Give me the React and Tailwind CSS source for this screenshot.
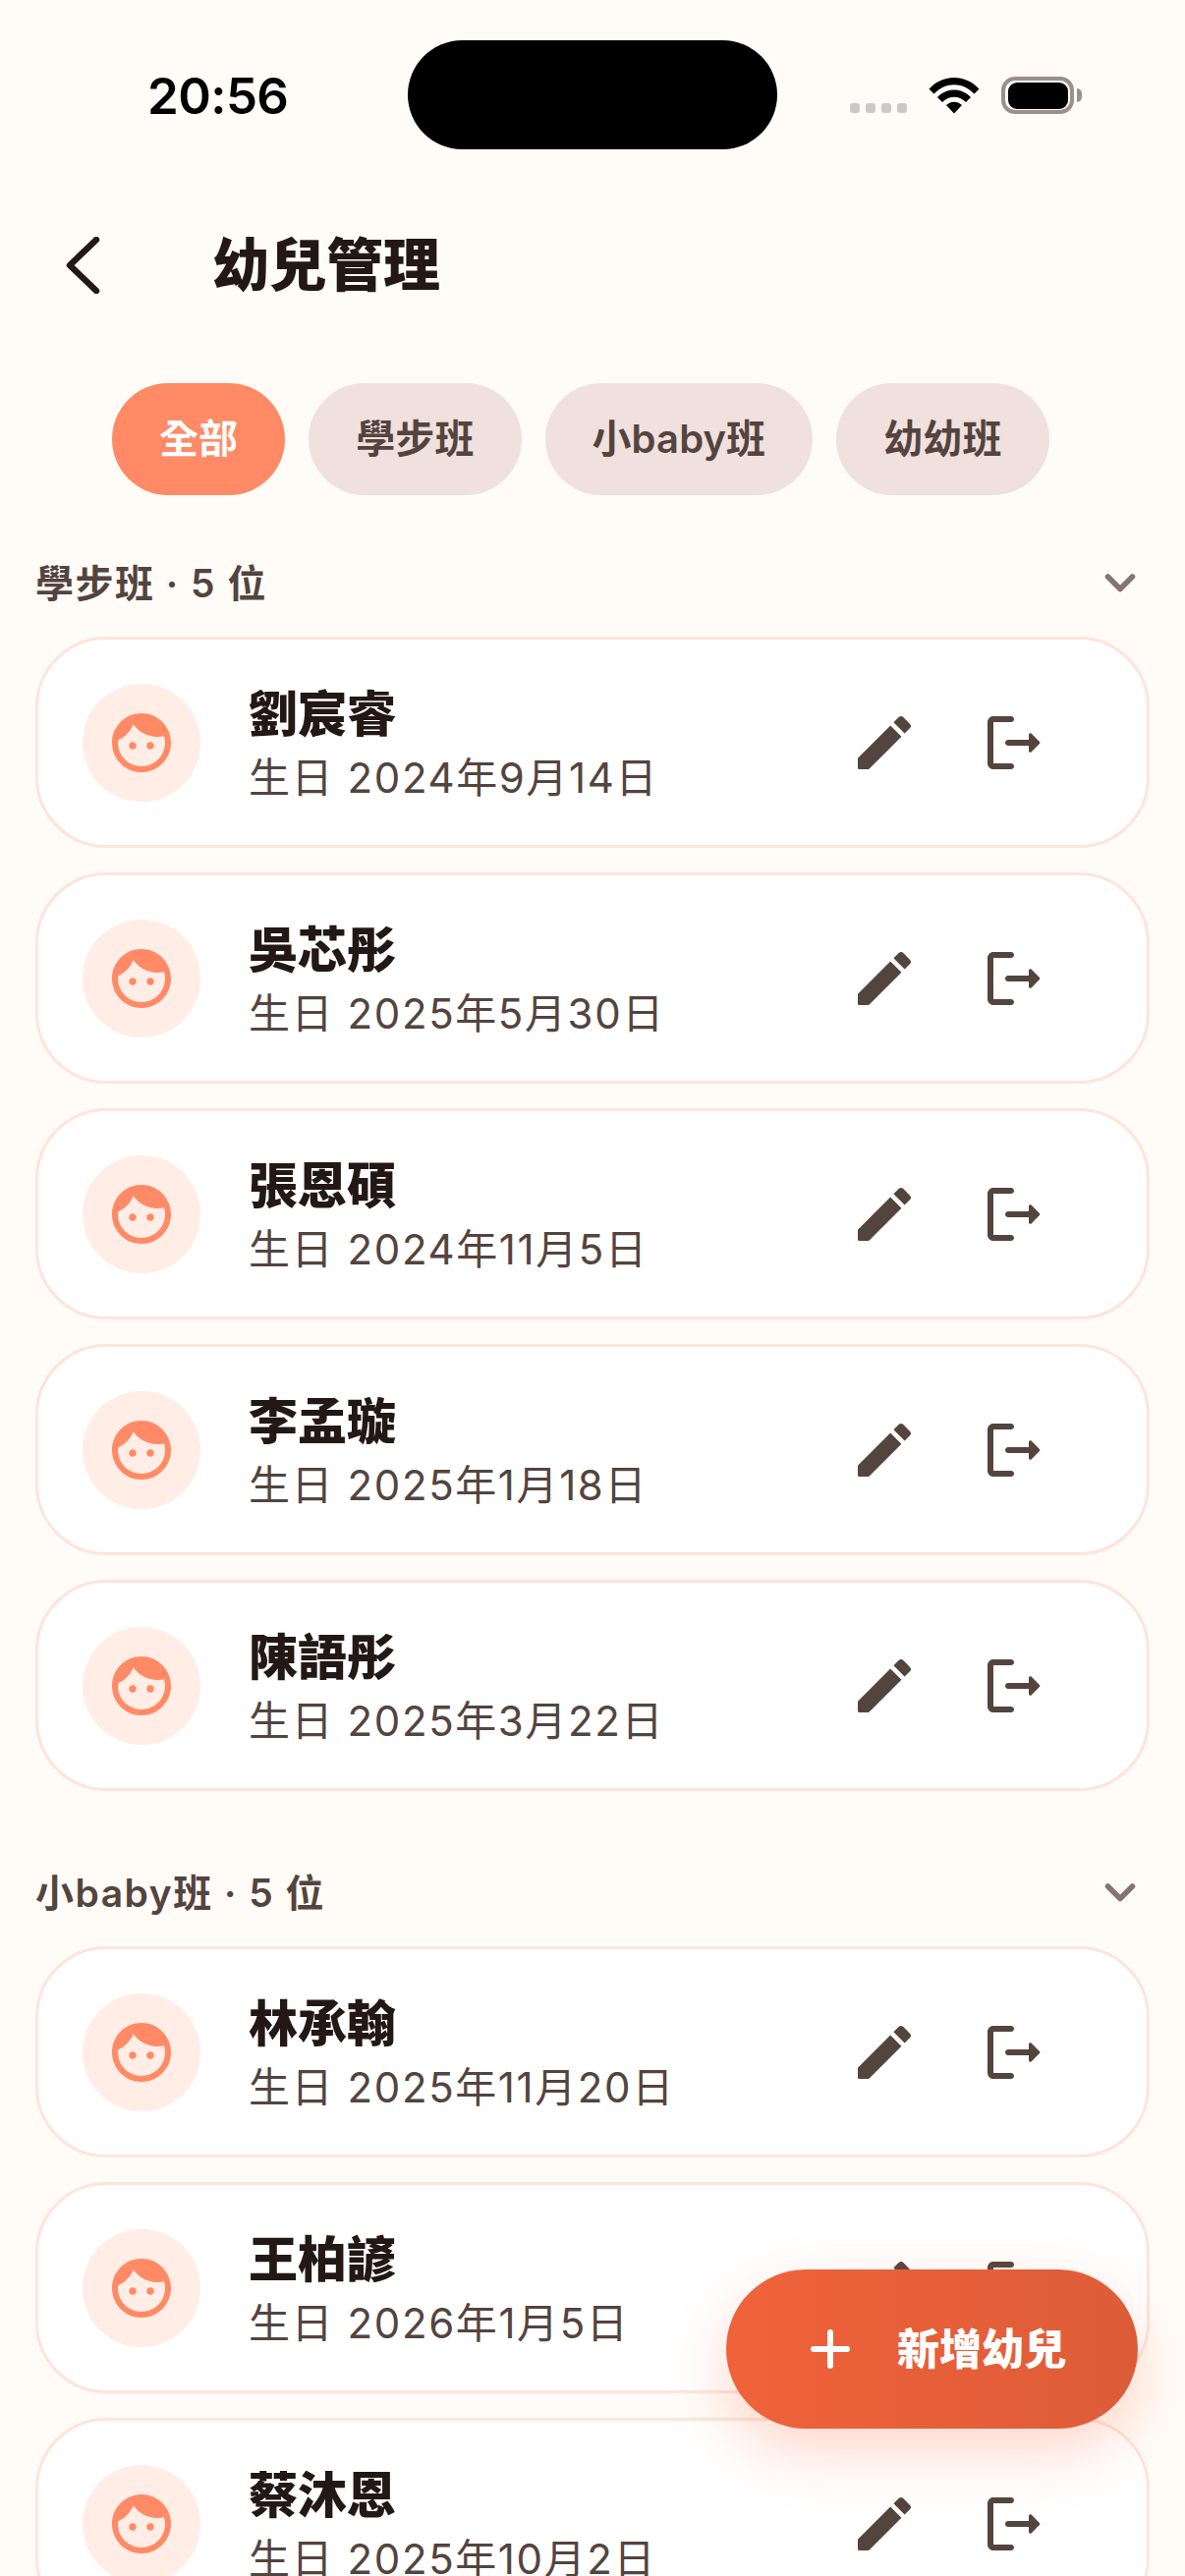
const sections = [
  {
    label: "學步班 · 5 位",
    kids: [
      ["劉宸睿", "生日 2024年9月14日"],
      ["吳芯彤", "生日 2025年5月30日"],
      ["張恩碩", "生日 2024年11月5日"],
      ["李孟璇", "生日 2025年1月18日"],
      ["陳語彤", "生日 2025年3月22日"],
    ],
  },
  {
    label: "小baby班 · 5 位",
    kids: [
      ["林承翰", "生日 2025年11月20日"],
      ["王柏諺", "生日 2026年1月5日"],
      ["蔡沐恩", "生日 2025年10月2日"],
    ],
  },
];

const chips = ["全部", "學步班", "小baby班", "幼幼班"];

function Face() {
  return (
    <svg width="72" height="72" viewBox="0 0 24 24" fill="#FF8A65">
      <path d="M9 11.75c-.69 0-1.25.56-1.25 1.25s.56 1.25 1.25 1.25 1.25-.56 1.25-1.25-.56-1.25-1.25-1.25zm6 0c-.69 0-1.25.56-1.25 1.25s.56 1.25 1.25 1.25 1.25-.56 1.25-1.25-.56-1.25-1.25-1.25zM12 2C6.48 2 2 6.48 2 12s4.48 10 10 10 10-4.48 10-10S17.52 2 12 2zm0 18c-4.41 0-8-3.59-8-8 0-.29.02-.58.05-.86 2.36-1.05 4.23-2.98 5.21-5.37C11.07 8.33 14.05 10 17.42 10c.78 0 1.53-.09 2.25-.26.21.71.33 1.47.33 2.26 0 4.41-3.59 8-8 8z" />
    </svg>
  );
}

function Edit() {
  return (
    <svg width="72" height="72" viewBox="0 0 24 24" fill="#54443E">
      <path d="M3 17.46v3.04c0 .28.22.5.5.5h3.04c.13 0 .26-.05.35-.15L17.81 9.94l-3.75-3.75L3.15 17.1c-.1.1-.15.22-.15.36z" />
      <path d="M20.71 7.04c.39-.39.39-1.02 0-1.41l-2.34-2.34c-.39-.39-1.02-.39-1.41 0l-1.83 1.83 3.75 3.75 1.83-1.83z" />
    </svg>
  );
}

function Logout() {
  return (
    <svg width="72" height="72" viewBox="0 0 24 24" fill="#54443E">
      <path d="M5 5h6c.55 0 1-.45 1-1s-.45-1-1-1H5c-1.1 0-2 .9-2 2v14c0 1.1.9 2 2 2h6c.55 0 1-.45 1-1s-.45-1-1-1H5V5z" />
      <path d="M20.65 11.65l-2.79-2.79c-.32-.32-.86-.1-.86.35V11h-7c-.55 0-1 .45-1 1s.45 1 1 1h7v1.79c0 .45.54.67.85.35l2.79-2.79c.2-.19.2-.51.01-.7z" />
    </svg>
  );
}

function Chevron() {
  return (
    <svg width="34" height="24" viewBox="0 0 34 24" fill="none" stroke="#857470" strokeWidth="5.5" strokeLinecap="round" strokeLinejoin="round">
      <path d="M4.5 5 L17 17.5 L29.5 5" />
    </svg>
  );
}

function Wifi() {
  return (
    <svg width="52" height="38" viewBox="0 0 52 38" fill="#000">
      <path d="M0.5 12.5 C14 -3 38 -3 51.5 12.5 L46.5 17.5 C35 5 17 5 5.5 17.5 Z" />
      <path d="M9 21 C18 11 34 11 43 21 L38 26 C31 19 21 19 14 26 Z" />
      <path d="M18 29 C22.5 24.5 29.5 24.5 34 29 L26 37.5 Z" />
    </svg>
  );
}

function Row({ name, sub }) {
  return (
    <div className="flex h-[215px] items-center rounded-[72px] border-[3px] border-[#FFE4DB] bg-white pl-[45px] pr-[99px]">
      <div className="flex h-[120px] w-[120px] shrink-0 items-center justify-center rounded-full bg-[#FFEDE6]">
        <Face />
      </div>
      <div className="ml-[49px] min-w-0 flex-1 pt-[5px]">
        <div className="text-[50px] leading-[60px] font-black text-[#231815]">{name}</div>
        <div className="mt-[8px] text-[42px] leading-[54px] tracking-[1.6px] text-[#54443E]">{sub}</div>
      </div>
      <div className="flex items-center gap-[60px]">
        <Edit />
        <Logout />
      </div>
    </div>
  );
}

export default function App() {
  return (
    <div className="relative h-[2622px] w-[1206px] overflow-hidden bg-[#FFFCF8] font-['Inter','Noto_Sans_CJK_TC',sans-serif]">
      <div className="flex h-[160px] items-start pt-[41px]">
        <div className="ml-[150px] mt-[29px] w-[142px] text-[51px] leading-[56px] font-semibold tracking-[-0.6px] text-black">20:56</div>
        <div className="ml-[123px] h-[111px] w-[376px] rounded-[56px] bg-black"></div>
        <div className="ml-[74px] mt-[37px] flex items-end">
          <div className="mb-[1px] flex gap-[6px]">
            <span className="h-[10px] w-[10px] rounded-[3px] bg-[#C9C9C9]"></span>
            <span className="h-[10px] w-[10px] rounded-[3px] bg-[#C9C9C9]"></span>
            <span className="h-[10px] w-[10px] rounded-[3px] bg-[#C9C9C9]"></span>
            <span className="h-[10px] w-[10px] rounded-[3px] bg-[#C9C9C9]"></span>
          </div>
          <div className="ml-[22px]"><Wifi /></div>
          <div className="ml-[22px] flex items-center">
            <div className="flex h-[38px] w-[74px] items-center justify-center rounded-[14px] border-[4px] border-[#9C8F8C]">
              <div className="h-[27px] w-[61px] rounded-[9px] bg-black"></div>
            </div>
            <div className="ml-[3px] h-[14px] w-[5px] rounded-r-full bg-[#9C8F8C]"></div>
          </div>
        </div>
      </div>

      <div className="flex h-[220px] items-center pl-[66px]">
        <svg width="36" height="58" viewBox="0 0 36 58" fill="none" stroke="#231815" strokeWidth="6.5" strokeLinecap="round" strokeLinejoin="round">
          <path d="M32 3 L5 29 L32 55" />
        </svg>
        <div className="ml-[114px] text-[58px] font-black leading-[70px] text-[#231815]">幼兒管理</div>
      </div>

      <div className="mt-[10px] flex gap-[24px] pl-[114px]">
        {chips.map((c, i) => (
          <div
            key={c}
            className={
              i === 0
                ? "flex h-[114px] items-center rounded-full bg-[#FF8A65] px-[48px] text-[40px] font-semibold tracking-[0.1px] text-white"
                : "flex h-[114px] items-center rounded-full bg-[#F0E0DE] px-[48px] text-[40px] font-semibold tracking-[0.1px] text-[#54443E]"
            }
          >
            {c}
          </div>
        ))}
      </div>

      <div className="mt-[60px] flex flex-col gap-[74px] px-[36px]">
        {sections.map((s) => (
          <section key={s.label}>
            <div className="flex h-[60px] items-center justify-between pr-[13px]">
              <span className="text-[39px] font-semibold tracking-[1.5px] text-[#54443E]">{s.label}</span>
              <Chevron />
            </div>
            <div className="mt-[24px] flex flex-col gap-[25px]">
              {s.kids.map(([n, b]) => (
                <Row key={n} name={n} sub={b} />
              ))}
            </div>
          </section>
        ))}
      </div>

      <div className="absolute left-[739px] top-[2310px] flex h-[162px] w-[419px] items-center rounded-full bg-linear-to-r from-[#F0623A] to-[#DD5C38] pl-[86px] shadow-[0_24px_60px_rgba(255,112,67,0.28)]">
        <svg width="40" height="40" viewBox="0 0 40 40" fill="none" stroke="#fff" strokeWidth="6" strokeLinecap="round">
          <path d="M20 3 V37 M3 20 H37" />
        </svg>
        <span className="ml-[48px] text-[43px] font-extrabold text-white">新增幼兒</span>
      </div>
    </div>
  );
}
